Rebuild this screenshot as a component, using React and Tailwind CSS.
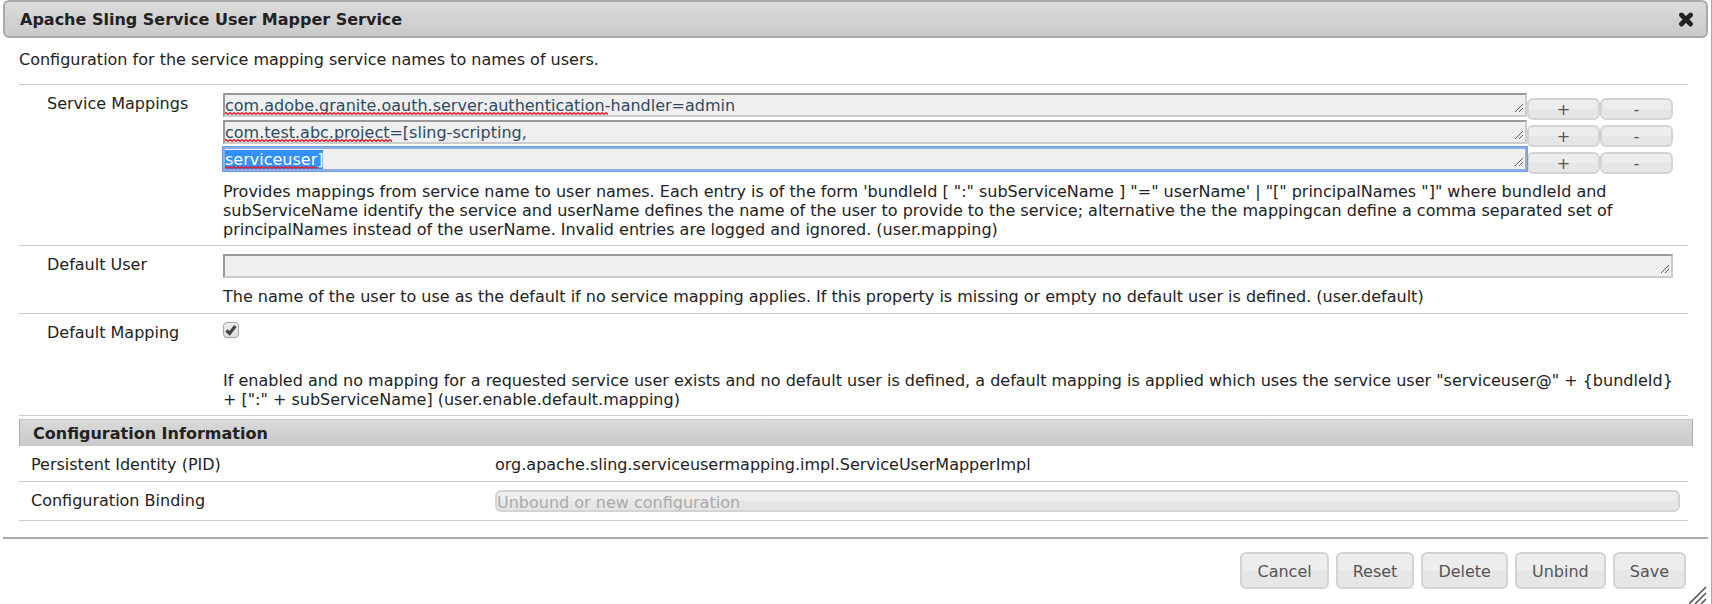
import React, { useEffect, useRef, useState } from 'react';

const initialMappings = [
  { value: 'com.adobe.granite.oauth.server:authentication-handler=admin', marked: 383 },
  { value: 'com.test.abc.project=[sling-scripting,', marked: 167 },
  { value: 'serviceuser]', marked: 92 },
];

const actions = ['Cancel', 'Reset', 'Delete', 'Unbind', 'Save'];

const fieldClass =
  'block w-full h-6 pt-px resize-none overflow-hidden whitespace-nowrap border-2 border-t-[#999] border-l-[#999] border-r-[#ccc] border-b-[#ccc] bg-[#efefef] text-[#2e4a62] leading-5 outline-none selection:bg-[#3390ff] selection:text-white';

const buttonClass =
  'rounded-md border-2 border-[#d3d3d3] bg-linear-to-b from-[#ededed] from-50% to-[#e6e6e6] to-50% pt-0.5 text-[#555] cursor-pointer';

// Small diagonal handle in the corner of a text area
const Grip = () => (
  <svg className="absolute right-1 bottom-1 pointer-events-none" width="9" height="9" viewBox="0 0 9 9" shapeRendering="crispEdges">
    <path d="M0.5 8.5L8.5 0.5M4.5 8.5L8.5 4.5" stroke="#555" strokeWidth="1" />
  </svg>
);

// Red wavy line under words the spell checker does not know
const Squiggle = ({ id, width }) => (
  <svg className="absolute left-0.5 bottom-0.5 pointer-events-none" width={width} height="3">
    <defs>
      <pattern id={id} width="4" height="3" patternUnits="userSpaceOnUse">
        <path d="M-1 2.4L1 0.6L3 2.4L5 0.6" fill="none" stroke="#e0202c" strokeWidth="1.4" />
      </pattern>
    </defs>
    <rect width={width} height="3" fill={`url(#${id})`} />
  </svg>
);

const Row = ({ label, htmlFor, children }) => (
  <div className="flex border-t border-[#ccc]">
    <label htmlFor={htmlFor} className="w-51 shrink-0 pl-7 pt-[9px] leading-5">
      {label}
    </label>
    <div className="flex-1 min-w-0 pt-2">{children}</div>
  </div>
);

const App = () => {
  const [mappings, setMappings] = useState(initialMappings);
  const [defaultUser, setDefaultUser] = useState('');
  const [defaultMapping, setDefaultMapping] = useState(true);
  const activeField = useRef(null);

  useEffect(() => {
    activeField.current?.focus();
    activeField.current?.select();
  }, []);

  const handleChange = (index, value) => {
    setMappings((prev) => prev.map((m, i) => (i === index ? { value, marked: 0 } : m)));
  };

  const addMapping = (index) => {
    setMappings((prev) => [...prev.slice(0, index + 1), { value: '', marked: 0 }, ...prev.slice(index + 1)]);
  };

  const removeMapping = (index) => {
    setMappings((prev) => prev.filter((_, i) => i !== index));
  };

  return (
    <div className="relative min-h-screen bg-white border-r border-[#aaa] font-['Verdana','DejaVu_Sans',sans-serif] text-base text-[#222]">
      {/* Title bar */}
      <div className="mx-[3px] h-[38px] flex items-center justify-between rounded-md border-2 border-[#aaa] bg-linear-to-b from-[#dcdcdc] to-[#c9c9c9] pt-0.5 pl-[15px] pr-3">
        <h1 className="font-bold">Apache Sling Service User Mapper Service</h1>
        <button type="button" aria-label="Close" className="cursor-pointer">
          <svg width="16" height="16" viewBox="0 0 16 16">
            <path d="M3.5 3L12.5 12M12.5 3L3.5 12" stroke="#222" strokeWidth="4.8" strokeLinecap="round" />
          </svg>
        </button>
      </div>

      <div className="pl-[19px] pr-[23px]">
        <p className="pt-3 pb-[14px] leading-5">Configuration for the service mapping service names to names of users.</p>

        <Row label="Service Mappings" htmlFor="mapping-0">
          <div className="flex flex-col gap-[3px] pr-[15px]">
            {mappings.map((mapping, index) => (
              <div key={index} className="flex">
                <div className="relative flex-1">
                  <textarea
                    id={`mapping-${index}`}
                    aria-label={`Service mapping ${index + 1}`}
                    ref={index === 2 ? activeField : null}
                    rows={1}
                    spellCheck={false}
                    value={mapping.value}
                    onChange={(e) => handleChange(index, e.target.value)}
                    className={`${fieldClass} focus:border-[#8aaee6] focus:ring-1 focus:ring-[#6f9ce0]`}
                  />
                  <Squiggle id={`squiggle-${index}`} width={mapping.marked} />
                  <Grip />
                </div>
                <button type="button" onClick={() => addMapping(index)} className={`${buttonClass} w-[73px] h-[22px] mt-[5px] -mb-[3px] leading-4`}>
                  +
                </button>
                <button type="button" onClick={() => removeMapping(index)} className={`${buttonClass} w-[73px] h-[22px] mt-[5px] -mb-[3px] leading-4`}>
                  -
                </button>
              </div>
            ))}
          </div>
          <p className="pt-[11px] pb-[6px] leading-[19px]">
            Provides mappings from service name to user names. Each entry is of the form 'bundleId [ ":" subServiceName ] "=" userName' | "[" principalNames "]" where bundleId and
            subServiceName identify the service and userName defines the name of the user to provide to the service; alternative the the mappingcan define a comma separated set of
            principalNames instead of the userName. Invalid entries are logged and ignored. (user.mapping)
          </p>
        </Row>

        <Row label="Default User" htmlFor="default-user">
          <div className="relative mr-[15px]">
            <textarea id="default-user" rows={1} value={defaultUser} onChange={(e) => setDefaultUser(e.target.value)} className={fieldClass} />
            <Grip />
          </div>
          <p className="pt-[9px] pb-[7px] leading-[19px]">
            The name of the user to use as the default if no service mapping applies. If this property is missing or empty no default user is defined. (user.default)
          </p>
        </Row>

        <Row label="Default Mapping" htmlFor="default-mapping">
          <div className="relative w-4 h-4">
            <input
              id="default-mapping"
              type="checkbox"
              checked={defaultMapping}
              onChange={(e) => setDefaultMapping(e.target.checked)}
              className="block size-4 appearance-none rounded-sm border border-[#a5a5a5] bg-linear-to-b from-[#efefef] to-[#dcdcdc] shadow-xs"
            />
            {defaultMapping && (
              <svg className="absolute inset-0 pointer-events-none" width="16" height="16" viewBox="0 0 16 16">
                <path d="M3.4 8.4L6.6 11.4L12.4 4" fill="none" stroke="#444" strokeWidth="3.2" />
              </svg>
            )}
          </div>
          <p className="pt-[33px] pb-[6px] leading-[19px]">
            If enabled and no mapping for a requested service user exists and no default user is defined, a default mapping is applied which uses the service user "serviceuser@" + {'{bundleId}'}
            {' '}+ [":" + subServiceName] (user.enable.default.mapping)
          </p>
        </Row>
        <div className="border-t border-[#ccc]" />
      </div>

      {/* Configuration information */}
      <div className="pl-[19px] pr-[18px] pt-[3px]">
        <h2 className="h-[27px] border border-b-0 border-t-[#ccc] border-x-[#aaa] bg-linear-to-b from-[#dadada] to-[#c9c9c9] pl-[13px] font-bold leading-[27px]">
          Configuration Information
        </h2>
      </div>
      <div className="pl-[19px] pr-[23px]">
        <div className="flex h-[36px] items-center border-b border-[#ccc] pt-0.5 pl-3">
          <span className="w-[464px] shrink-0">Persistent Identity (PID)</span>
          <span>org.apache.sling.serviceusermapping.impl.ServiceUserMapperImpl</span>
        </div>
        <div className="flex h-[39px] items-start border-b border-[#ccc] pl-3 pr-2 pt-2">
          <label htmlFor="binding" className="w-[464px] shrink-0 pt-px leading-5">
            Configuration Binding
          </label>
          <select
            id="binding"
            disabled
            className="flex-1 h-[22px] appearance-none rounded-md border-2 border-[#d3d3d3] bg-linear-to-b from-[#ededed] from-50% to-[#e6e6e6] to-50% pt-px text-[#aaa] leading-5 opacity-100"
          >
            <option>Unbound or new configuration</option>
          </select>
        </div>
      </div>

      {/* Footer buttons */}
      <div className="mx-[3px] mt-4 flex justify-end gap-[7px] border-t-2 border-[#aaa] pt-[13px] pr-[22px]">
        {actions.map((action) => (
          <button key={action} type="button" className={`${buttonClass} h-[37px] px-[15px]`}>
            {action}
          </button>
        ))}
      </div>

      <svg className="absolute right-1 bottom-0 pointer-events-none" width="18" height="18" viewBox="0 0 18 18">
        <path d="M0 18L17 1M6 18L17 7M12 18L17 13" stroke="#555" strokeWidth="1.6" />
      </svg>
    </div>
  );
};

export default App;
